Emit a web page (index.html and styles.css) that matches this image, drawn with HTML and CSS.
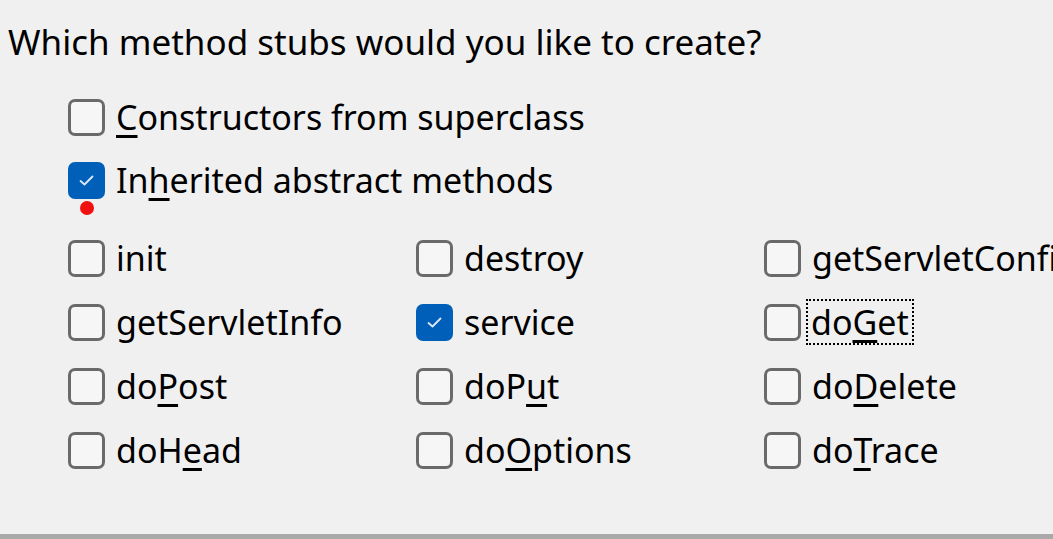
FILE: index.html
```html
<!DOCTYPE html>
<html>
<head>
<meta charset="utf-8">
<link rel="stylesheet" href="styles.css">
</head>
<body>
<div class="dialog">
  <div class="title">Which method stubs would you like to create?</div>
  <div class="opts">
    <div class="row first"><span class="box"></span><span class="lbl"><u>C</u>onstructors from superclass</span></div>
    <div class="row second"><span class="box checked"><svg viewBox="0 0 37 37"><path d="M12.5 19 L16.5 22.5 L24.5 14.5"/></svg></span><span class="lbl">In<u>h</u>erited abstract methods</span><span class="dot"></span></div>
    <div class="grid">
      <div class="row"><span class="box"></span><span class="lbl">init</span></div>
      <div class="row"><span class="box"></span><span class="lbl">destroy</span></div>
      <div class="row"><span class="box"></span><span class="lbl">getServletConfig</span></div>
      <div class="row"><span class="box"></span><span class="lbl">getServletInfo</span></div>
      <div class="row"><span class="box checked"><svg viewBox="0 0 37 37"><path d="M12.5 19 L16.5 22.5 L24.5 14.5"/></svg></span><span class="lbl">service</span></div>
      <div class="row"><span class="box"></span><span class="lbl focus">do<u>G</u>et</span></div>
      <div class="row"><span class="box"></span><span class="lbl">do<u>P</u>ost</span></div>
      <div class="row"><span class="box"></span><span class="lbl">doP<u>u</u>t</span></div>
      <div class="row"><span class="box"></span><span class="lbl">do<u>D</u>elete</span></div>
      <div class="row"><span class="box"></span><span class="lbl">doH<u>e</u>ad</span></div>
      <div class="row"><span class="box"></span><span class="lbl">do<u>O</u>ptions</span></div>
      <div class="row"><span class="box"></span><span class="lbl">do<u>T</u>race</span></div>
    </div>
  </div>
</div>
</body>
</html>
```
FILE: styles.css
```css
html, body {
  margin: 0;
  padding: 0;
}
body {
  width: 1053px;
  height: 539px;
  overflow: hidden;
  background: #f0f0f0;
  font-family: "Noto Sans", "Open Sans", sans-serif;
  color: #000;
}
.dialog {
  height: 534px;
  border-bottom: 5px solid #a9a9a9;
  box-sizing: content-box;
  overflow: hidden;
}
.title {
  font-size: 35px;
  line-height: 40px;
  padding: 22px 0 0 8px;
  white-space: nowrap;
}
.opts {
  padding-left: 68px;
  margin-top: 35px;
}
.row {
  display: flex;
  align-items: center;
  height: 40px;
  position: relative;
  white-space: nowrap;
  min-width: 0;
}
.row.second {
  margin-top: 23px;
}
.grid {
  margin-top: 38px;
  display: grid;
  grid-template-columns: 348px 348px 348px;
  grid-auto-rows: 40px;
  row-gap: 24px;
}
.box {
  flex: none;
  width: 37px;
  height: 37px;
  box-sizing: border-box;
  border: 3px solid #6a6a6a;
  border-radius: 7px;
  background: #f6f6f6;
  display: flex;
}
.box.checked {
  background: #005fb8;
  border-color: #005fb8;
}
.box svg {
  width: 37px;
  height: 37px;
  margin: -3px;
}
.box svg path {
  fill: none;
  stroke: #dfe9f5;
  stroke-width: 1.8;
  stroke-linecap: round;
  stroke-linejoin: round;
}
.lbl {
  font-size: 34px;
  line-height: 40px;
  margin-left: 9px;
  padding: 0 2px;
}
.lbl u {
  text-decoration-thickness: 3px;
  text-underline-offset: 5px;
}
.lbl.focus {
  outline: 2px dotted #000;
  outline-offset: 1px;
  margin-left: 8px;
}
.dot {
  position: absolute;
  left: 12px;
  top: 41px;
  width: 14px;
  height: 14px;
  border-radius: 50%;
  background: #f01010;
}
```
